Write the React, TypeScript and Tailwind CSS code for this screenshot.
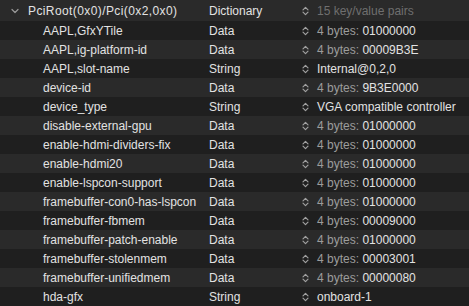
import React from "react";

type Row = { key: string; type: string; prefix?: string; value: string };

const rows: Row[] = [
  { key: "AAPL,GfxYTile", type: "Data", prefix: "4 bytes:", value: "01000000" },
  { key: "AAPL,ig-platform-id", type: "Data", prefix: "4 bytes:", value: "00009B3E" },
  { key: "AAPL,slot-name", type: "String", value: "Internal@0,2,0" },
  { key: "device-id", type: "Data", prefix: "4 bytes:", value: "9B3E0000" },
  { key: "device_type", type: "String", value: "VGA compatible controller" },
  { key: "disable-external-gpu", type: "Data", prefix: "4 bytes:", value: "01000000" },
  { key: "enable-hdmi-dividers-fix", type: "Data", prefix: "4 bytes:", value: "01000000" },
  { key: "enable-hdmi20", type: "Data", prefix: "4 bytes:", value: "01000000" },
  { key: "enable-lspcon-support", type: "Data", prefix: "4 bytes:", value: "01000000" },
  { key: "framebuffer-con0-has-lspcon", type: "Data", prefix: "4 bytes:", value: "01000000" },
  { key: "framebuffer-fbmem", type: "Data", prefix: "4 bytes:", value: "00009000" },
  { key: "framebuffer-patch-enable", type: "Data", prefix: "4 bytes:", value: "01000000" },
  { key: "framebuffer-stolenmem", type: "Data", prefix: "4 bytes:", value: "00003001" },
  { key: "framebuffer-unifiedmem", type: "Data", prefix: "4 bytes:", value: "00000080" },
  { key: "hda-gfx", type: "String", value: "onboard-1" },
];

function Stepper() {
  return (
    <svg width="7" height="10" viewBox="0 0 7 10" className="shrink-0">
      <path d="M1 3.8 L3.5 1.3 L6 3.8 M1 6.2 L3.5 8.7 L6 6.2" fill="none" stroke="#a0a0a0" strokeWidth="1.2" strokeLinecap="round" strokeLinejoin="round" />
    </svg>
  );
}

export default function App() {
  return (
    <div className="w-[469px] h-[306px] overflow-hidden bg-[#1f1f1f] text-[12px] text-[#e2e2e2]" style={{ fontFamily: '"Liberation Sans", Arial, sans-serif' }}>
      <div className="flex items-center h-[21px] bg-[#2a2a2a] pt-[1px]">
        <div className="w-[28px] flex justify-center pl-[1px]">
          <svg width="8" height="6" viewBox="0 0 8 6">
            <path d="M1 1.5 L4 4.5 L7 1.5" fill="none" stroke="#9a9a9a" strokeWidth="1.2" strokeLinecap="round" strokeLinejoin="round" />
          </svg>
        </div>
        <div className="w-[181px] whitespace-nowrap tracking-[0.4px]">PciRoot(0x0)/Pci(0x2,0x0)</div>
        <div className="w-[93px]">Dictionary</div>
        <Stepper />
        <div className="pl-[8px] text-[#6f6f6f] whitespace-nowrap">15 key/value pairs</div>
      </div>
      {rows.map((r, i) => (
        <div key={r.key} className={`flex items-center h-[19px] ${i % 2 === 0 ? "bg-[#1f1f1f]" : "bg-[#2a2a2a]"}`}>
          <div className="w-[209px] pl-[43px] whitespace-nowrap">{r.key}</div>
          <div className="w-[93px]">{r.type}</div>
          <Stepper />
          <div className="pl-[8px] whitespace-nowrap">
            {r.prefix && <span className="text-[#9c9c9c]">{r.prefix} </span>}
            <span>{r.value}</span>
          </div>
        </div>
      ))}
    </div>
  );
}
